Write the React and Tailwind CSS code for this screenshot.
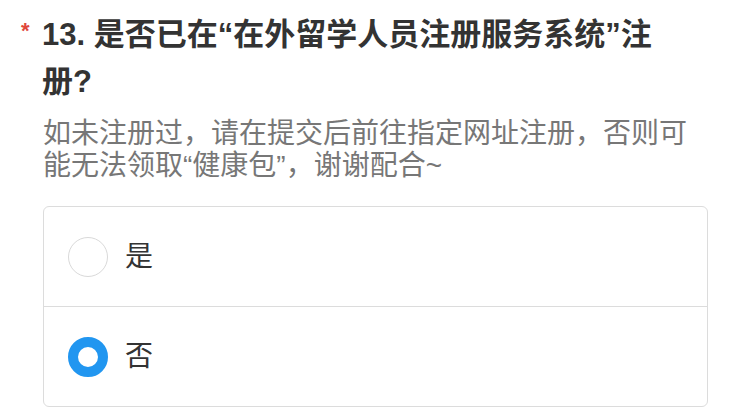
export default function App() {
  return (
    <div
      className="w-[750px] h-[409px] bg-white overflow-hidden"
      style={{ fontFamily: '"Liberation Sans", "Noto Sans CJK SC", sans-serif' }}
    >
      <div className="flex pl-[21px] pt-[11px]">
        <span className="w-[21px] text-[#e0463b] text-[22px] leading-[40px] font-bold">*</span>
        <h1 className="w-[640px] text-[31px] leading-[47px] font-bold text-[#333]">
          13. 是否已在“在外留学人员注册服务系统”注册?
        </h1>
      </div>

      <p className="ml-[43px] mt-[13px] w-[664px] text-[28px] leading-[32px] text-[#777]">
        如未注册过，请在提交后前往指定网址注册，否则可能无法领取“健康包”，谢谢配合~
      </p>

      <div className="ml-[43px] mt-[24px] w-[665px] border border-[#dcdcdc] rounded-[6px]">
        <label className="flex items-center h-[100px] border-b border-[#dcdcdc] pl-[24px]">
          <span className="w-[40px] h-[40px] rounded-full border-[1.5px] border-[#d9d9d9] bg-white" />
          <span className="ml-[17px] text-[28px] text-[#333]">是</span>
        </label>
        <label className="flex items-center h-[99px] pl-[24px]">
          <span className="w-[40px] h-[40px] rounded-full border-[10px] border-[#2196f0] bg-white" />
          <span className="ml-[17px] text-[28px] text-[#333]">否</span>
        </label>
      </div>
    </div>
  );
}
